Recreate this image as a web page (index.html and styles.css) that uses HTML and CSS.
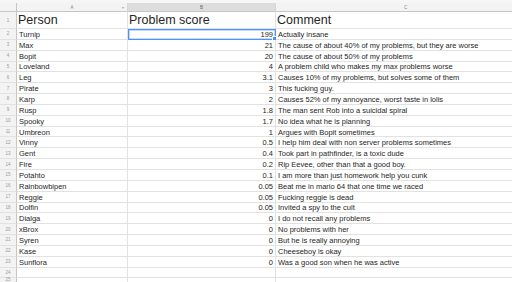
FILE: index.html
```html
<!DOCTYPE html>
<html>
<head>
<meta charset="utf-8">
<link rel="stylesheet" href="styles.css">
</head>
<body>
<div class="topstrip"></div>
<div class="sheet">
  <div class="corner"></div>
  <div class="colhead">A<span class="caret">▾</span></div>
  <div class="colhead sel">B</div>
  <div class="colhead">C</div>

  <div class="rownum big">1</div>
  <div class="cell title">Person</div>
  <div class="cell title">Problem score</div>
  <div class="cell title">Comment</div>

  <div class="rownum">2</div><div class="cell">Turnip</div><div class="cell num active">199<span class="handle"></span></div><div class="cell">Actually insane</div>
  <div class="rownum">3</div><div class="cell">Max</div><div class="cell num">21</div><div class="cell">The cause of about 40% of my problems, but they are worse</div>
  <div class="rownum">4</div><div class="cell">Bopit</div><div class="cell num">20</div><div class="cell">The cause of about 50% of my problems</div>
  <div class="rownum">5</div><div class="cell">Loveland</div><div class="cell num">4</div><div class="cell">A problem child who makes my max problems worse</div>
  <div class="rownum">6</div><div class="cell">Leg</div><div class="cell num">3.1</div><div class="cell">Causes 10% of my problems, but solves some of them</div>
  <div class="rownum">7</div><div class="cell">Pirate</div><div class="cell num">3</div><div class="cell">This fucking guy.</div>
  <div class="rownum">8</div><div class="cell">Karp</div><div class="cell num">2</div><div class="cell">Causes 52% of my annoyance, worst taste in lolis</div>
  <div class="rownum">9</div><div class="cell">Rusp</div><div class="cell num">1.8</div><div class="cell">The man sent Rob into a suicidal spiral</div>
  <div class="rownum">10</div><div class="cell">Spooky</div><div class="cell num">1.7</div><div class="cell">No idea what he is planning</div>
  <div class="rownum">11</div><div class="cell">Umbreon</div><div class="cell num">1</div><div class="cell">Argues with Bopit sometimes</div>
  <div class="rownum">12</div><div class="cell">Vinny</div><div class="cell num">0.5</div><div class="cell">I help him deal with non server problems sometimes</div>
  <div class="rownum">13</div><div class="cell">Gent</div><div class="cell num">0.4</div><div class="cell">Took part in pathfinder, is a toxic dude</div>
  <div class="rownum">14</div><div class="cell">Fire</div><div class="cell num">0.2</div><div class="cell">Rip Eevee, other than that a good boy.</div>
  <div class="rownum">15</div><div class="cell">Potahto</div><div class="cell num">0.1</div><div class="cell">I am more than just homework help you cunk</div>
  <div class="rownum">16</div><div class="cell">Rainbowbipen</div><div class="cell num">0.05</div><div class="cell">Beat me in mario 64 that one time we raced</div>
  <div class="rownum">17</div><div class="cell">Reggie</div><div class="cell num">0.05</div><div class="cell">Fucking reggie is dead</div>
  <div class="rownum">18</div><div class="cell">Dolfin</div><div class="cell num">0.05</div><div class="cell">Invited a spy to the cult</div>
  <div class="rownum">19</div><div class="cell">Dialga</div><div class="cell num">0</div><div class="cell">I do not recall any problems</div>
  <div class="rownum">20</div><div class="cell">xBrox</div><div class="cell num">0</div><div class="cell">No problems with her</div>
  <div class="rownum">21</div><div class="cell">Syren</div><div class="cell num">0</div><div class="cell">But he is really annoying</div>
  <div class="rownum">22</div><div class="cell">Kase</div><div class="cell num">0</div><div class="cell">Cheeseboy is okay</div>
  <div class="rownum">23</div><div class="cell">Sunflora</div><div class="cell num">0</div><div class="cell">Was a good son when he was active</div>
  <div class="rownum">24</div><div class="cell"></div><div class="cell num"></div><div class="cell"></div>
  <div class="rownum last">25</div><div class="cell"></div><div class="cell num"></div><div class="cell"></div>
</div>
</body>
</html>
```

FILE: styles.css
```css
html, body {
  margin: 0;
  padding: 0;
  background: #ffffff;
  overflow: hidden;
}
body {
  width: 512px;
  height: 282px;
  font-family: "Liberation Sans", Arial, sans-serif;
  color: #262626;
}
.topstrip {
  height: 3px;
  background: #f6f6f6;
}
.sheet {
  display: grid;
  grid-template-columns: 17px 111px 148px 260px;
  grid-template-rows: 9px 17px;
  grid-auto-rows: 10.85px;
}
.corner {
  background: #f3f3f3;
  border-right: 1px solid #c6c6c6;
  border-bottom: 1px solid #c6c6c6;
  box-sizing: border-box;
}
.colhead {
  position: relative;
  background: #f3f3f3;
  border-right: 1px solid #d6d6d6;
  border-bottom: 1px solid #c6c6c6;
  box-sizing: border-box;
  font-size: 4.5px;
  color: #8a8a8a;
  display: flex;
  align-items: center;
  justify-content: center;
}
.colhead.sel {
  background: #dddddd;
  color: #666666;
}
.caret {
  position: absolute;
  right: 3px;
  top: 2px;
  font-size: 4px;
  color: #aaaaaa;
}
.rownum {
  background: #f3f3f3;
  border-right: 1px solid #c6c6c6;
  border-bottom: 1px solid #e2e2e2;
  box-sizing: border-box;
  font-size: 4.5px;
  color: #9a9a9a;
  display: flex;
  align-items: center;
  justify-content: center;
}
.rownum.last {
  align-items: flex-start;
  line-height: 3px;
}
.cell {
  position: relative;
  border-right: 1px solid #e2e2e2;
  border-bottom: 1px solid #e2e2e2;
  box-sizing: border-box;
  font-size: 7.5px;
  line-height: 9px;
  padding: 1px 2px 0 2px;
  white-space: nowrap;
  overflow: visible;
  display: flex;
  align-items: center;
}
.cell.title {
  font-size: 12.5px;
  line-height: 14px;
  align-items: flex-end;
  padding: 0 2px 1px 1px;
}
.cell.num {
  justify-content: flex-end;
}
.cell.active {
  border: 1px solid #4d90fe;
  box-shadow: inset 0 0 0 0.5px #8ab4f8;
}
.handle {
  position: absolute;
  right: -2px;
  bottom: -2px;
  width: 3px;
  height: 3px;
  background: #4d90fe;
  border: 0.5px solid #ffffff;
}
```
